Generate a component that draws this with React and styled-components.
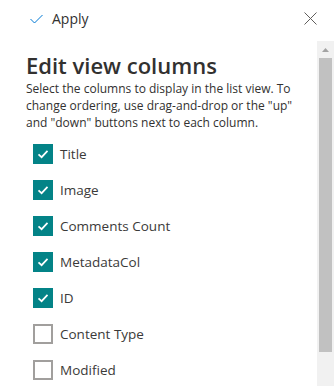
import React from "react";
import styled, { createGlobalStyle } from "styled-components";

const GlobalStyle = createGlobalStyle`
  html, body {
    margin: 0;
    padding: 0;
    background: #fff;
    overflow: hidden;
  }
  body {
    font-family: "Open Sans", "Noto Sans", sans-serif;
    color: #323130;
  }
`;

const columns = [
  { name: "Title", checked: true },
  { name: "Image", checked: true },
  { name: "Comments Count", checked: true },
  { name: "MetadataCol", checked: true },
  { name: "ID", checked: true },
  { name: "Content Type", checked: false },
  { name: "Modified", checked: false },
];

const Panel = styled.div`
  width: 334px;
  height: 386px;
  display: flex;
  flex-direction: column;
  overflow: hidden;
`;

const Header = styled.div`
  height: 41px;
  flex: none;
  display: flex;
  align-items: center;
  justify-content: space-between;
  padding: 0 17px 0 30px;
  box-sizing: border-box;
`;

const ApplyButton = styled.button`
  display: flex;
  align-items: center;
  gap: 9px;
  border: none;
  background: none;
  padding: 0;
  margin-top: -4px;
  font: inherit;
  font-size: 14px;
  color: #323130;
  cursor: pointer;
`;

const CloseButton = styled.button`
  border: none;
  background: none;
  padding: 0;
  margin-top: -4px;
  display: flex;
  cursor: pointer;
`;

const Body = styled.div`
  flex: 1;
  display: flex;
  min-height: 0;
`;

const Content = styled.div`
  flex: 1;
  padding: 10px 0 0 26px;
`;

const Heading = styled.h2`
  margin: 0;
  font-size: 22px;
  font-weight: 600;
  line-height: 29px;
  color: #323130;
`;

const Description = styled.p`
  margin: 0;
  font-size: 12px;
  line-height: 17px;
  color: #323130;
  width: 270px;
`;

const List = styled.div`
  display: flex;
  flex-direction: column;
  gap: 16px;
  padding: 13px 0 0 7px;
`;

const Row = styled.label`
  display: flex;
  align-items: center;
  gap: 7px;
  font-size: 13.5px;
  color: #3b3a39;
  cursor: pointer;
`;

const Box = styled.span`
  width: 20px;
  height: 20px;
  box-sizing: border-box;
  display: flex;
  align-items: center;
  justify-content: center;
  background: ${(p) => (p.$checked ? "#038387" : "#fff")};
  border: 2px solid ${(p) => (p.$checked ? "#038387" : "#a19f9d")};
`;

const Scrollbar = styled.div`
  width: 17px;
  flex: none;
  background: #f1f1f1;
  display: flex;
  flex-direction: column;
  align-items: center;
`;

const Arrow = styled.div`
  height: 17px;
  width: 100%;
  display: flex;
  align-items: center;
  justify-content: center;
`;

const Thumb = styled.div`
  width: 13px;
  height: 294px;
  background: #c1c1c1;
`;

const Check = ({ color, size = 12 }) => (
  <svg width={size} height={size} viewBox="0 0 12 12" fill="none">
    <path d="M1.5 6.3 L4.6 9.2 L10.5 2.8" stroke={color} strokeWidth="1.7" />
  </svg>
);

export default function App() {
  return (
    <>
      <GlobalStyle />
      <Panel>
        <Header>
          <ApplyButton>
            <svg width="13" height="10" viewBox="0 0 13 10" fill="none">
              <path d="M0.5 5 L4.5 9 L12.5 1" stroke="#0078d4" strokeWidth="1" />
            </svg>
            Apply
          </ApplyButton>
          <CloseButton>
            <svg width="13" height="13" viewBox="0 0 13 13">
              <path d="M0.5 0.5 L12.5 12.5 M12.5 0.5 L0.5 12.5" stroke="#605e5c" strokeWidth="1" />
            </svg>
          </CloseButton>
        </Header>
        <Body>
          <Content>
            <Heading>Edit view columns</Heading>
            <Description>
              Select the columns to display in the list view. To change
              ordering, use drag-and-drop or the "up" and "down" buttons next
              to each column.
            </Description>
            <List>
              {columns.map((c) => (
                <Row key={c.name}>
                  <Box $checked={c.checked}>
                    {c.checked && <Check color="#fff" />}
                  </Box>
                  {c.name}
                </Row>
              ))}
            </List>
          </Content>
          <Scrollbar>
            <Arrow>
              <svg width="7" height="4" viewBox="0 0 7 4">
                <path d="M0 4 L3.5 0 L7 4 Z" fill="#a3a3a3" />
              </svg>
            </Arrow>
            <Thumb />
          </Scrollbar>
        </Body>
      </Panel>
    </>
  );
}
